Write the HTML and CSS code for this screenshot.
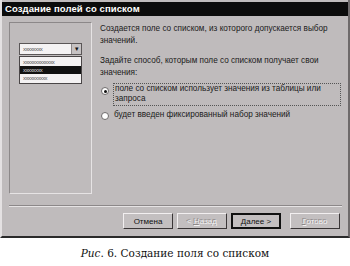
FILE: index.html
```html
<!DOCTYPE html>
<html lang="ru">
<head>
    <meta charset="UTF-8">
    <title>Создание полей со списком</title>
    <link rel="stylesheet" href="styles.css">
</head>
<body>
    <div class="window">
        <div class="titlebar">Создание полей со списком</div>
        <div class="content">
            <div class="preview">
                <div class="combo">
                    <span class="combo-value">xxxxxxxx</span>
                    <span class="combo-btn">&#9662;</span>
                </div>
                <div class="combo-list">
                    <div class="item">xxxxxxxxxxxxx</div>
                    <div class="item selected">xxxxxxxx</div>
                    <div class="item">xxxxxxxxxx</div>
                </div>
            </div>
            <div class="info">
                <p>Создается поле со списком, из которого допускается выбор значений.</p>
                <p class="last">Задайте способ, которым поле со списком получает свои значения:</p>
                <div class="option">
                    <span class="radio checked"></span>
                    <span class="label focused">поле со списком использует значения из таблицы или запроса</span>
                </div>
                <div class="option">
                    <span class="radio"></span>
                    <span class="label">будет введен фиксированный набор значений</span>
                </div>
            </div>
        </div>
        <div class="separator"></div>
        <div class="buttons">
            <button class="btn">Отмена</button>
            <button class="btn disabled">&lt; <u>Н</u>азад</button>
            <button class="btn default"><u>Д</u>алее &gt;</button>
            <button class="btn disabled gap"><u>Г</u>отово</button>
        </div>
    </div>
    <div class="caption"><i>Рис</i>. 6. Создание поля со списком</div>
</body>
</html>
```

FILE: styles.css
```css
body {
    margin: 0;
    background: #ffffff;
    font-family: 'Liberation Sans', Arial, sans-serif;
}

.window {
    width: 346px;
    height: 236px;
    background: #bfbbbc;
    border-left: 2px solid #e4e1e2;
    border-bottom: 2px solid #2a2a2a;
    border-right: 2px solid #6e6a6b;
    display: flex;
    flex-direction: column;
}

.titlebar {
    margin: 2px 0 0 0;
    height: 14px;
    line-height: 14px;
    background: #0c0c0c;
    color: #ffffff;
    font-weight: bold;
    font-size: 9.5px;
    padding-left: 3px;
    letter-spacing: 0.1px;
}

.content {
    display: flex;
    padding-top: 6px;
    height: 172px;
}

.preview {
    box-sizing: border-box;
    width: 83px;
    height: 172px;
    margin-left: 7px;
    border: 1px solid #e6e3e4;
    border-top-color: #8c8889;
    border-left-color: #8c8889;
    padding: 20px 0 0 9px;
}

.combo {
    box-sizing: border-box;
    width: 63px;
    height: 12px;
    background: #f4f2f3;
    border: 1px solid #5a5657;
    display: flex;
    align-items: center;
    justify-content: space-between;
}

.combo-value,
.item {
    font-size: 6px;
    letter-spacing: -0.6px;
    color: #555;
    padding-left: 3px;
    line-height: 8px;
}

.combo-btn {
    width: 9px;
    height: 10px;
    background: #c6c2c3;
    border-left: 1px solid #8c8889;
    font-size: 7px;
    line-height: 10px;
    text-align: center;
    color: #111;
}

.combo-list {
    box-sizing: border-box;
    width: 63px;
    margin-top: 1px;
    background: #f4f2f3;
    border: 1px solid #4a4647;
    padding: 1px 0;
}

.item.selected {
    background: #111;
    color: #d8d8d8;
}

.info {
    margin-left: 8px;
    width: 242px;
    font-size: 8.2px;
    color: #1a1a1a;
}

.info p {
    margin: 0 0 8px 0;
    line-height: 12px;
}

.info p:first-child {
    margin-top: 1px;
}

.info p.last {
    margin-bottom: 6px;
}

.option {
    display: flex;
    align-items: flex-start;
    margin-bottom: 4px;
}

.radio {
    box-sizing: border-box;
    width: 8px;
    height: 8px;
    margin: 2px 4px 0 1px;
    border-radius: 50%;
    background: #ffffff;
    border: 1px solid #6e6a6b;
    flex-shrink: 0;
    display: flex;
    align-items: center;
    justify-content: center;
}

.radio.checked::after {
    content: '';
    width: 3px;
    height: 3px;
    border-radius: 50%;
    background: #111;
}

.label {
    line-height: 10px;
    padding: 0 1px;
}

.label.focused {
    width: 224px;
    border: 1px dotted #555;
    padding: 0 1px 1px 1px;
    margin-top: -2px;
}

.separator {
    margin: 11px 6px 0 7px;
    border-top: 1px solid #8c8889;
    border-bottom: 1px solid #e6e3e4;
}

.buttons {
    display: flex;
    justify-content: flex-end;
    padding: 6px 8px 0 0;
}

.btn {
    box-sizing: border-box;
    width: 50px;
    height: 16px;
    margin-left: 4px;
    padding: 0;
    font-family: 'Liberation Sans', Arial, sans-serif;
    font-size: 8px;
    color: #111;
    background: #c3bfc0;
    border: 1px solid;
    border-color: #f2eff0 #3a3637 #3a3637 #f2eff0;
}

.btn.disabled {
    color: #f4f2f3;
    text-shadow: -1px -1px 0 #8c8889;
}

.btn.default {
    border: 2px solid #111;
    border-top-color: #111;
}

.btn.gap {
    margin-left: 9px;
}

.caption {
    text-align: center;
    font-family: 'DejaVu Serif', 'Liberation Serif', serif;
    font-size: 10.5px;
    color: #111;
    margin-top: 9px;
}
```
